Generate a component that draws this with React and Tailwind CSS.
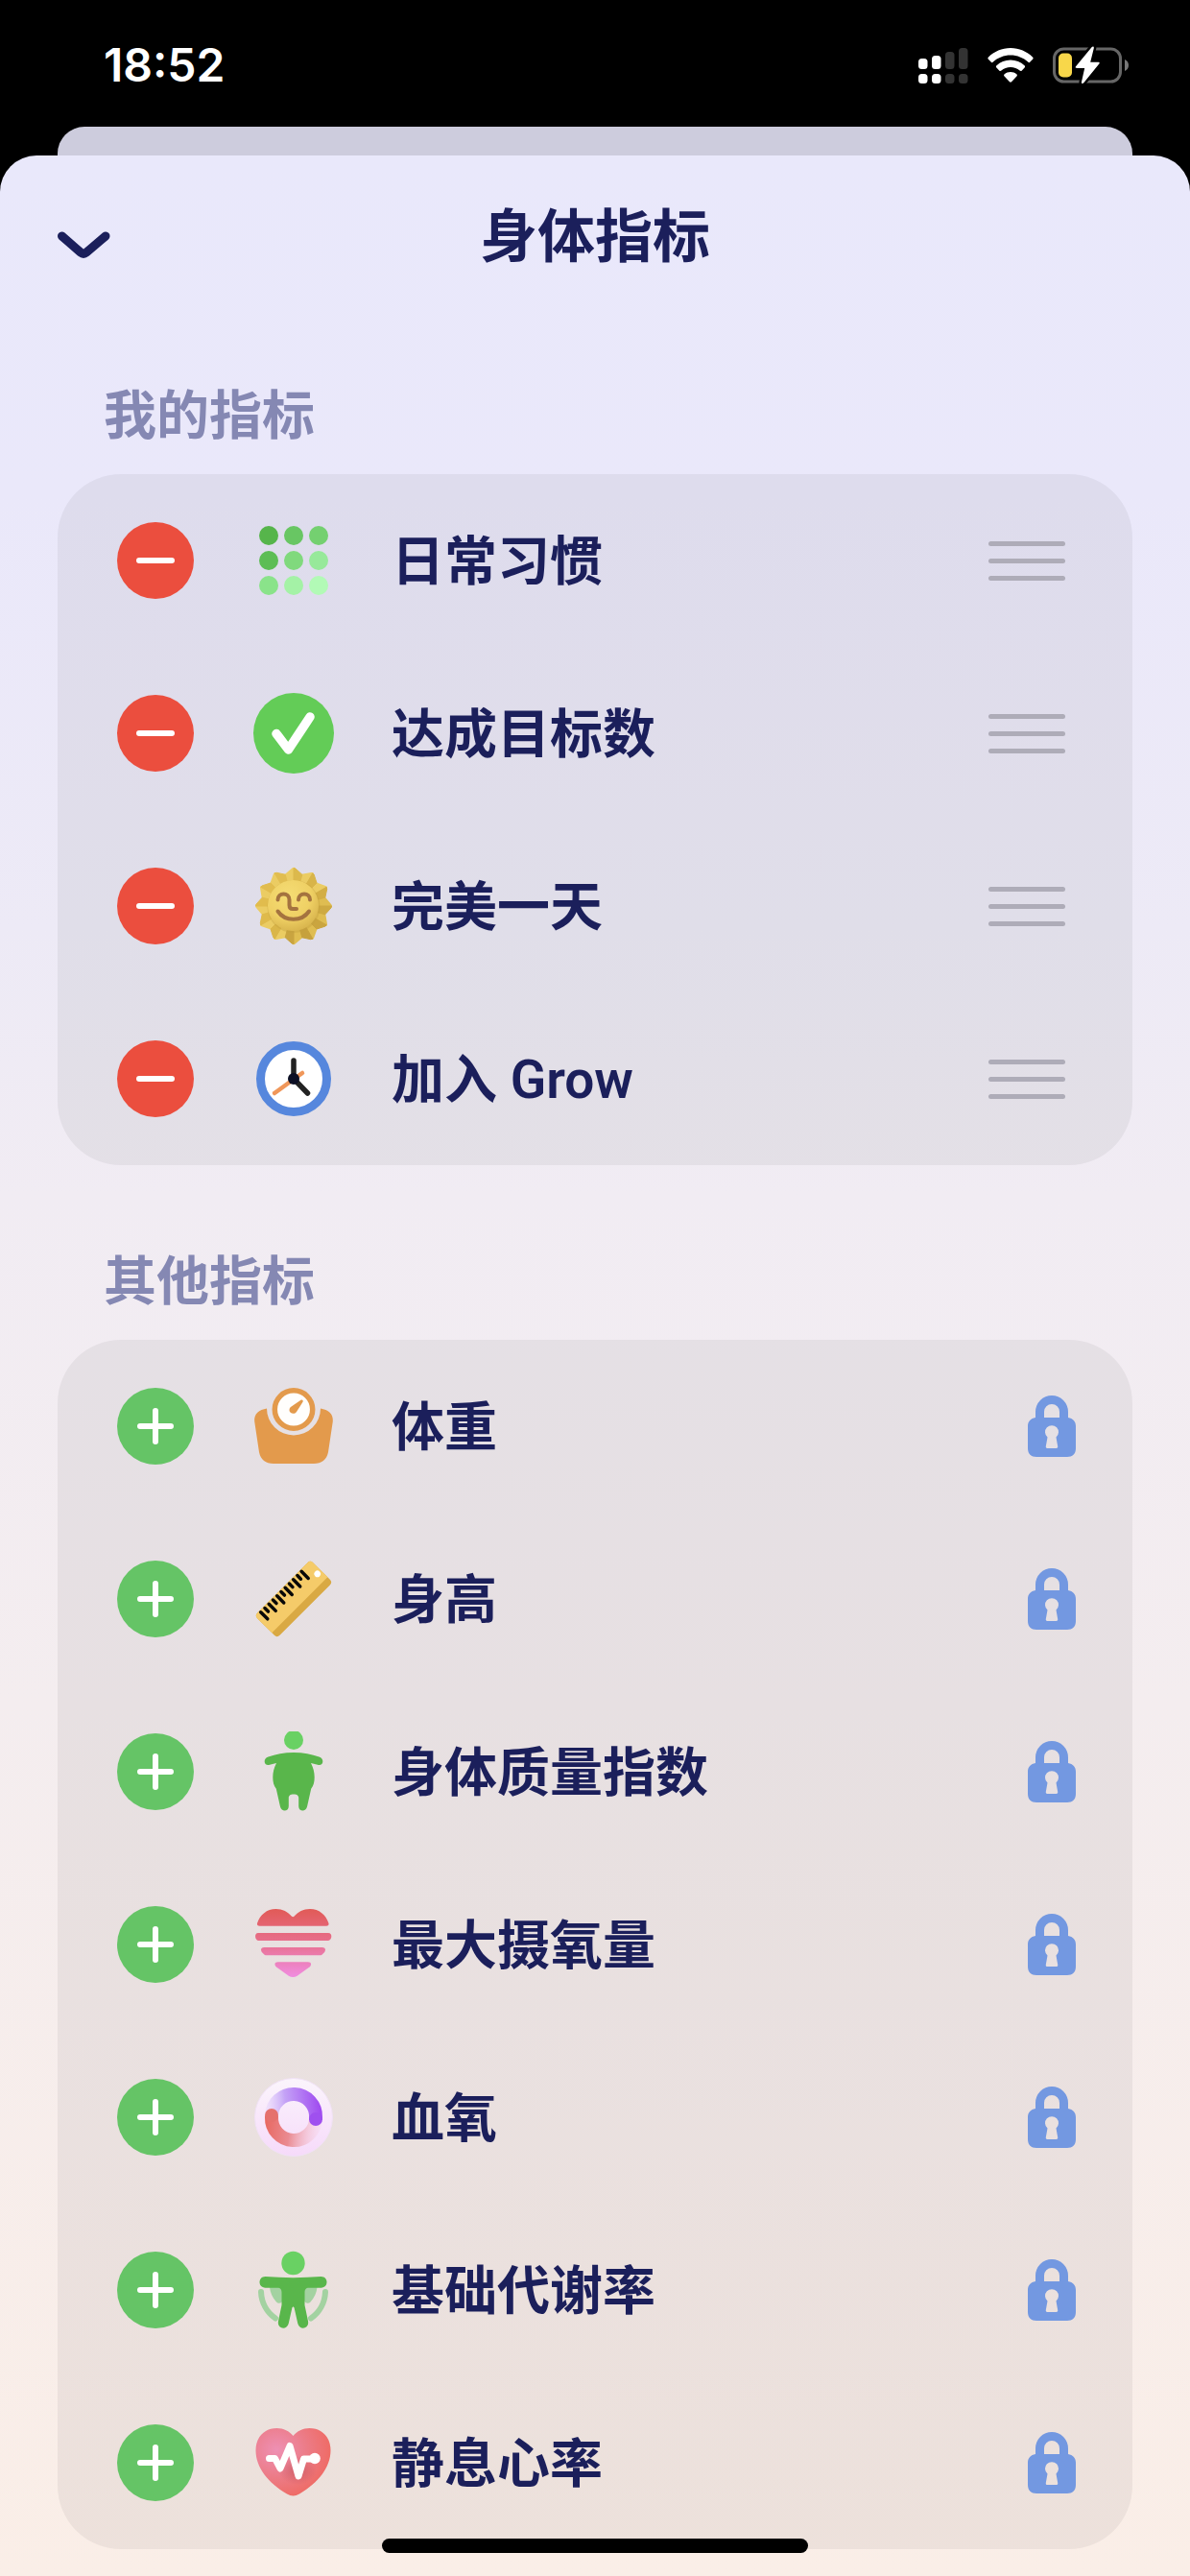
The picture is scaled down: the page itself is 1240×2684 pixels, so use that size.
import React, { useState } from 'react';

/* ---------- Status bar icons ---------- */

const SignalIcon = () => {
  const bars = [
    { x: 0, y: 11, h: 11, on: true },
    { x: 14, y: 8, h: 14, on: true },
    { x: 28, y: 4, h: 18, on: false },
    { x: 42, y: 0, h: 22, on: false },
  ];

  return (
    <svg className="w-[52px] h-[37px]" viewBox="0 0 52 37" aria-hidden="true">
      {bars.map((bar) => (
        <g key={bar.x} fill={bar.on ? '#ffffff' : '#333333'}>
          <rect x={bar.x} y={bar.y} width="9.5" height={bar.h} rx="3.5" />
          <rect x={bar.x} y="27" width="9.5" height="10" rx="3.5" />
        </g>
      ))}
    </svg>
  );
};

const WifiIcon = () => (
  <svg className="w-12 h-9" viewBox="0 0 48 36" fill="#ffffff" aria-hidden="true">
    <path d="M24 0C33 0 41 3.6 47 9.4c.8.8.8 1.6.1 2.3l-2.7 2.9c-.7.7-1.5.7-2.2 0C37.4 10.300 31 7.600 24 7.600S10.600 10.300 5.800 14.600c-.7.7-1.500.7-2.200 0L.9 11.700c-.7-.7-.7-1.500.1-2.300C7 3.600 15 0 24 0Z" />
    <path d="M24 12.500c5.600 0 10.700 2.200 14.500 5.800.8.8.8 1.600.1 2.300l-2.800 2.900c-.7.7-1.400.7-2.200.1C31 21.300 27.700 20 24 20s-7 1.300-9.600 3.600c-.8.6-1.500.6-2.200-.1l-2.800-2.900c-.7-.7-.7-1.500.1-2.300 3.800-3.600 8.900-5.800 14.500-5.800Z" />
    <path d="M24 25c2.400 0 4.600.9 6.300 2.300.8.7.8 1.500.1 2.200L25 35.200c-.6.600-1.400.6-2 0l-5.400-5.700c-.7-.7-.7-1.500.1-2.200C19.400 25.900 21.600 25 24 25Z" />
  </svg>
);

const BatteryIcon = () => (
  <svg className="w-20 h-10" viewBox="0 0 80 40" aria-hidden="true">
    <rect x="1.500" y="3" width="69" height="34" rx="10" fill="none" stroke="#666666" strokeWidth="3" />
    <path d="M75 14c2.500 1 4 3.300 4 6s-1.500 5-4 6Z" fill="#777777" />
    <rect x="6" y="7.500" width="14" height="25" rx="5" fill="#f8d74a" />
    <path
      d="M40.500 1.200 24 21.200c-.8 1-.3 1.800.9 1.800h8.300L30 37.200c-.4 2 1.200 2.400 2.300 1L48.300 18.600c.8-1 .4-1.800-.9-1.800h-8.200L42.800 2.200c.4-2-1.200-2.300-2.300-1Z"
      fill="#ffffff"
      stroke="#000000"
      strokeWidth="5"
      paintOrder="stroke"
    />
  </svg>
);

/* ---------- Metric icons, all on an 84 x 84 canvas ---------- */

const IconCanvas = ({ children }) => (
  <svg className="w-[84px] h-[84px] shrink-0" viewBox="0 0 84 84" fill="none" aria-hidden="true">
    {children}
  </svg>
);

const HabitIcon = () => {
  const rows = [
    ['#56b54b', '#68c663', '#74d070'],
    ['#5dbd55', '#80d97d', '#97e99a'],
    ['#8ae38a', '#a4f2a6', '#b2fab6'],
  ];
  return (
    <IconCanvas>
      {rows.map((row, r) =>
        row.map((color, c) => (
          <circle key={color} cx={16 + c * 26} cy={16 + r * 26} r="10" fill={color} />
        ))
      )}
    </IconCanvas>
  );
};

const GoalIcon = () => (
  <IconCanvas>
    <circle cx="42" cy="42" r="42" fill="#63cc57" />
    <path d="m24 42.500 12.500 16.500L59 25" stroke="#fff" strokeWidth="9.500" strokeLinecap="round" strokeLinejoin="round" />
  </IconCanvas>
);

const SunIcon = () => {
  const point = (angle, radius) => {
    const rad = ((angle - 90) * Math.PI) / 180;
    return `${(42 + radius * Math.cos(rad)).toFixed(1)} ${(42 + radius * Math.sin(rad)).toFixed(1)}`;
  };
  const rays = Array.from({ length: 12 }, (_, i) => i * 30);
  const shades = ['#dcb94c', '#d8b449', '#d3ae45', '#ceaa42', '#caa53f', '#c6a13d', '#c9a440', '#dab649', '#dfba4b', '#e1bc4d', '#e1bc4e', '#e1bd50'];

  return (
    <IconCanvas>
      <defs>
        <radialGradient id="sunFace" cx="0.4" cy="0.3" r="0.75">
          <stop offset="0" stopColor="#f5dc74" />
          <stop offset="0.6" stopColor="#efd064" />
          <stop offset="1" stopColor="#d6b24b" />
        </radialGradient>
      </defs>
      {rays.map((angle, i) => (
        <path
          key={angle}
          d={`M42 42 L${point(angle - 14, 32)} L${point(angle, 37.5)} Z`}
          fill={i > 2 && i < 7 ? '#dfbd51' : '#ebcc63'}
          stroke={i > 2 && i < 7 ? '#dfbd51' : '#ebcc63'}
          strokeWidth="5"
          strokeLinejoin="round"
        />
      ))}
      {rays.map((angle, i) => (
        <path
          key={angle}
          d={`M42 42 L${point(angle, 39.5)} L${point(angle + 3, 39)} L${point(angle + 15, 34)} Z`}
          fill={shades[i]}
          stroke={shades[i]}
          strokeLinejoin="round"
        />
      ))}
      <circle cx="42" cy="42.500" r="27.500" fill="#c39f3e" opacity="0.4" />
      <circle cx="41.500" cy="41.500" r="26.500" fill="url(#sunFace)" />
      <g stroke="#a4733f" strokeWidth="4" strokeLinecap="round" strokeLinejoin="round">
        <path d="M25.500 35.500c0-8 12-8 12 0v5.500c0 2.500 1 4 3.500 4h4" />
        <path d="M47 35.500c0-8 12-8 12 0" />
        <path d="M25.500 47.500c7.500 11 25 11 32.500 0" />
      </g>
    </IconCanvas>
  );
};

const ClockIcon = () => (
  <IconCanvas>
    <circle cx="42" cy="42" r="34.500" fill="#fff" stroke="#5687dd" strokeWidth="9" />
    <path d="M51 36 22 57" stroke="#f0975a" strokeWidth="4.500" strokeLinecap="round" />
    <path d="M42 23v19l14.500 15" stroke="#222222" strokeWidth="5.500" strokeLinecap="round" strokeLinejoin="round" />
    <circle cx="42" cy="42" r="6" fill="#0c0f24" />
  </IconCanvas>
);

const ScaleIcon = () => (
  <IconCanvas>
    <path
      d="M14 23.500C6 25 .5 29 1.200 37L6 69c1.500 8 7 12 15 12h42c8 0 13.500-4 15-12l4.800-32C83.500 29 78 25 70 23.500A28 28 0 0 1 14 23.500Z"
      fill="#e39a4c"
    />
    <circle cx="42" cy="24.500" r="19.700" fill="#fffefc" stroke="#e39a4c" strokeWidth="5.500" />
    <path d="M49.500 14.700c1.500-.8 2.800.4 2 2L45 27c-1.500 2.300-4.500 2.300-6.300.8s-1.500-4.300.2-5.800Z" fill="#e39a4c" />
  </IconCanvas>
);

const RulerIcon = () => (
  <IconCanvas>
    <g transform="rotate(-45 42 42)">
      <rect x="1" y="25.500" width="82" height="33" rx="4" fill="#d9a943" />
      <path d="M5 25.500h74a4 4 0 0 1 4 4V51H1V29.500a4 4 0 0 1 4-4Z" fill="#f5cb69" />
      {Array.from({ length: 11 }, (_, i) => (
        <path
          key={i}
          d={`M${8 + i * 6} 27.500v${i % 2 ? 5 : 10}`}
          stroke="#080808"
          strokeWidth="3.500"
          strokeLinecap="round"
        />
      ))}
      <circle cx="78" cy="41" r="3.300" fill="#fff" />
    </g>
  </IconCanvas>
);

const BodyMassIcon = () => (
  <IconCanvas>
    <circle cx="42" cy="9" r="10" fill="#69d163" />
    <path
      d="M42 22c10 0 19 2 26.500 4.500 6 2 4.500 10-1.500 8.300L60 33c2.500 5 3.700 9.500 3.700 14.700 0 5-1 9-3.500 12L56 78.500c-1.500 6-8.800 5-8.800-.5v-8.500c0-2.500-1.500-4-5.200-4s-5.200 1.500-5.200 4V78c0 5.500-7.300 6.500-8.800.5l-4.200-18.800c-2.500-3-3.500-7-3.500-12 0-5.200 1.200-9.700 3.700-14.700l-7 1.800c-6 1.700-7.500-6.300-1.500-8.300C23 24 32 22 42 22Z"
      fill="#59b64b"
    />
  </IconCanvas>
);

const OxygenUptakeIcon = () => (
  <IconCanvas>
    <defs>
      <linearGradient id="uptake" x1="0" y1="5" x2="0" y2="76" gradientUnits="userSpaceOnUse">
        <stop offset="0" stopColor="#e15a57" />
        <stop offset="0.5" stopColor="#e8708f" />
        <stop offset="1" stopColor="#f08de0" />
      </linearGradient>
    </defs>
    <g fill="url(#uptake)">
      <path d="M4 20C7 11 14 5 23.500 5c7 0 12.500 3 16.300 7.500.9 1.100 2 1.100 2.900 0C46.500 8 52 5 59 5c9.500 0 16.500 6 19.500 15 .4 1.600-.6 2.700-2.500 2.700H6.500C4.600 22.700 3.600 21.600 4 20Z" />
      <path d="M5 30h73c5 0 4 8-.5 8h-72C1.500 38 .5 30 5 30Z" />
      <path d="M11.500 45h60c4.500 0 4 3.500 2 5.700-1.500 1.600-2.500 2.600-4.500 2.600H14c-2 0-3-1-4.500-2.600C7.500 48.500 7 45 11.500 45Z" />
      <path d="M25.500 60.300H57c3.500 0 4 3.200 1.500 5.200L46 74.500c-3.200 2-6.300 2-9.500 0L24 65.500c-2.500-2-2-5.200 1.500-5.200Z" />
    </g>
  </IconCanvas>
);

const BloodOxygenIcon = () => (
  <IconCanvas>
    <defs>
      <linearGradient id="oxyDisc" x1="42" y1="1" x2="42" y2="83" gradientUnits="userSpaceOnUse">
        <stop offset="0" stopColor="#fbf5fc" />
        <stop offset="1" stopColor="#f6dafa" />
      </linearGradient>
      <linearGradient id="oxyPurple" x1="12" y1="44" x2="70" y2="38" gradientUnits="userSpaceOnUse">
        <stop offset="0.02" stopColor="#d9c6fb" stopOpacity="0.2" />
        <stop offset="0.4" stopColor="#c4a2f6" />
        <stop offset="1" stopColor="#a04df0" />
      </linearGradient>
      <linearGradient id="oxyRed" x1="12" y1="42" x2="72" y2="50" gradientUnits="userSpaceOnUse">
        <stop offset="0" stopColor="#e8675f" />
        <stop offset="0.45" stopColor="#ea8b92" />
        <stop offset="1" stopColor="#f6d3e6" stopOpacity="0.2" />
      </linearGradient>
    </defs>
    <circle cx="42" cy="42" r="40.500" fill="url(#oxyDisc)" stroke="#f1e2f6" />
    <path d="M65 44a23 23 0 0 1-46-2v-1" stroke="url(#oxyRed)" strokeWidth="14" />
    <path d="M19 40a23 23 0 0 1 46 2v3" stroke="url(#oxyPurple)" strokeWidth="14" />
    <circle cx="65" cy="44" r="7" fill="#9f50ef" />
    <circle cx="19" cy="40" r="7" fill="#e5716d" />
  </IconCanvas>
);

const MetabolismIcon = () => (
  <IconCanvas>
    <g stroke="#a3d2a1" strokeWidth="6" strokeLinecap="round">
      <path d="M8 44c.5 11 6 21.500 15 27.500" />
      <path d="M75 44c-.5 11-6 21.500-15 27.500" />
    </g>
    <path d="M17 39c.5 6 3 11 7 15.500 2.500 2.500 6 .8 6.500-1.500V39ZM66.500 39c-.5 6-3 11-7 15.500-2.500 2.500-6 .8-6.500-1.500V39Z" fill="#a3d2a1" />
    <circle cx="41.500" cy="14" r="12.200" fill="#69d163" />
    <path
      d="M12.500 28c19 1.500 39 1.500 58 0 8 0 8 11.700 0 11.700H58c-3.500 0-4.500 2-4.500 5v13L57 74.500c1.500 8-8.700 10-10.700 2.500l-3.600-16c-.5-2-1.900-2-2.400 0L36.700 77c-2 7.500-12.200 5.500-10.700-2.500l3.500-16.800v-13c0-3-1-5-4.500-5H12.500c-8 0-8-11.700 0-11.700Z"
      fill="#59b64b"
    />
  </IconCanvas>
);

const HeartRateIcon = () => (
  <IconCanvas>
    <defs>
      <radialGradient id="heartFill" cx="0.28" cy="0.32" r="0.75">
        <stop offset="0" stopColor="#ee90b4" />
        <stop offset="0.55" stopColor="#ec7b86" />
        <stop offset="1" stopColor="#ef6a63" />
      </radialGradient>
      <radialGradient id="heartShade" cx="0.5" cy="0.5" r="0.5">
        <stop offset="0" stopColor="#c4555e" stopOpacity="0.7" />
        <stop offset="1" stopColor="#c4555e" stopOpacity="0" />
      </radialGradient>
    </defs>
    <path
      d="M41.500 14C45.500 9 51.500 6 58.500 6 71.500 6 80.500 15.500 80.500 29c0 18-13 34-32.500 45.500-4.500 2.500-8.500 2.500-13 0C15.500 63 2.500 47 2.500 29 2.500 15.500 11.500 6 24.500 6c7 0 13 3 17 8Z"
      fill="url(#heartFill)"
    />
    <ellipse cx="46" cy="50" rx="20" ry="15" fill="url(#heartShade)" />
    <path d="M16.500 37.500h6L28 48l10-23.500L47 56l5.500-18H63" stroke="#fff" strokeWidth="7" strokeLinecap="round" strokeLinejoin="round" />
    <circle cx="64" cy="37.500" r="5.800" fill="#fff" />
  </IconCanvas>
);

/* ---------- Row controls ---------- */

const DragHandle = () => (
  <span className="flex flex-col gap-[13px] w-20 shrink-0 cursor-grab">
    <span className="h-[5px] rounded-full bg-[#aeacb8]" />
    <span className="h-[5px] rounded-full bg-[#aeacb8]" />
    <span className="h-[5px] rounded-full bg-[#aeacb8]" />
  </span>
);

const LockIcon = () => (
  <svg className="w-[50px] h-16 shrink-0" viewBox="0 0 50 64" role="img" aria-label="已锁定">
    <path
      fillRule="evenodd"
      fill="#7398e1"
      d="M8 23v-6a17 17 0 0 1 34 0v6c5 .8 8 4 8 9v23c0 6-3.500 9-9 9H9c-5.500 0-9-3-9-9V32c0-5 3-8.200 8-9Zm9 0h16v-6a8 8 0 0 0-16 0Zm3.500 20.500L18.800 53c-.2 1.300.4 2 1.700 2h9c1.300 0 1.900-.7 1.700-2l-1.700-9.500a7 7 0 1 0-9 0Z"
    />
  </svg>
);

const MetricRow = ({ metric, active, onToggle }) => {
  const Icon = metric.icon;

  return (
    <li className={`flex items-center h-[180px] pl-[62px] ${active ? 'pr-[70px]' : 'pr-[59px]'}`}>
      <button
        type="button"
        onClick={() => onToggle(metric.id)}
        aria-label={`${active ? '移除' : '添加'}${metric.name}`}
        className={`flex items-center justify-center w-20 h-20 shrink-0 rounded-full ${active ? 'bg-[#eb4e3e]' : 'bg-[#65c466]'}`}
      >
        <svg className="w-10 h-10" viewBox="0 0 40 40" stroke="#fff" strokeWidth="6" strokeLinecap="round" aria-hidden="true">
          <path d={active ? 'M3 20h34' : 'M4 20h32M20 4v32'} />
        </svg>
      </button>
      <div className="ml-[62px] flex">
        <Icon />
      </div>
      <span className="flex-1 ml-[60px] pt-[2px] text-[55px] leading-[64px] font-semibold text-[#1b1f5b]">{metric.name}</span>
      {active ? <DragHandle /> : <LockIcon />}
    </li>
  );
};

const MetricSection = ({ title, metrics, active, onToggle }) => (
  <section>
    <h2 className="pl-12 mb-7 text-[55px] leading-[66px] font-semibold text-[#8588b3]">{title}</h2>
    <ul className="rounded-[66px] bg-black/5">
      {metrics.map((metric) => (
        <MetricRow key={metric.id} metric={metric} active={active} onToggle={onToggle} />
      ))}
    </ul>
  </section>
);

const METRICS = [
  { id: 'habits', name: '日常习惯', icon: HabitIcon },
  { id: 'goals', name: '达成目标数', icon: GoalIcon },
  { id: 'perfect-day', name: '完美一天', icon: SunIcon },
  { id: 'joined', name: '加入 Grow', icon: ClockIcon },
  { id: 'weight', name: '体重', icon: ScaleIcon },
  { id: 'height', name: '身高', icon: RulerIcon },
  { id: 'bmi', name: '身体质量指数', icon: BodyMassIcon },
  { id: 'vo2max', name: '最大摄氧量', icon: OxygenUptakeIcon },
  { id: 'spo2', name: '血氧', icon: BloodOxygenIcon },
  { id: 'bmr', name: '基础代谢率', icon: MetabolismIcon },
  { id: 'resting-hr', name: '静息心率', icon: HeartRateIcon },
];

const App = () => {
  const [mine, setMine] = useState(['habits', 'goals', 'perfect-day', 'joined']);

  const toggleMetric = (id) => {
    setMine((current) => (current.includes(id) ? current.filter((m) => m !== id) : [...current, id]));
  };

  return (
    <div className="relative flex flex-col min-h-screen bg-black font-['Roboto','Noto_Sans_CJK_SC',sans-serif]">
      <header className="flex items-center justify-between h-[132px] pl-[108px] pr-[63px]">
        <time className="pt-1 font-['Inter',sans-serif] text-[48px] leading-[56px] font-semibold text-white">18:52</time>
        <div className="flex items-center gap-5 pt-1">
          <SignalIcon />
          <WifiIcon />
          <BatteryIcon />
        </div>
      </header>

      {/* Top edge of the previous screen, behind the sheet */}
      <div className="h-[30px] mx-[60px] rounded-t-[28px] bg-[#cdccdd]" />

      <main className="flex-1 px-[60px] pb-7 rounded-t-[38px] bg-[linear-gradient(180deg,#e9e8fb_0%,#eae8fa_14%,#edeaf6_32%,#f1ecf3_43%,#f4edef_64%,#faeee7_100%)]">
        <div className="grid grid-cols-[56px_1fr_56px] items-center h-[168px]">
          <button type="button" aria-label="关闭" className="w-14 h-14">
            <svg viewBox="0 0 56 56" fill="none" stroke="#1b1f5b" strokeWidth="9" strokeLinecap="round" aria-hidden="true">
              <path d="m4.500 28 19.500 17q3 2.500 6 0l20-17" />
            </svg>
          </button>
          <h1 className="pt-1 text-center text-[60px] leading-[72px] font-semibold text-[#1b1f5b]">身体指标</h1>
        </div>

        <div className="flex flex-col gap-[88px] pt-[70px]">
          <MetricSection
            title="我的指标"
            metrics={METRICS.filter((m) => mine.includes(m.id))}
            active
            onToggle={toggleMetric}
          />
          <MetricSection
            title="其他指标"
            metrics={METRICS.filter((m) => !mine.includes(m.id))}
            active={false}
            onToggle={toggleMetric}
          />
        </div>
      </main>

      <div className="absolute bottom-6 left-1/2 -translate-x-1/2 w-[444px] h-[15px] rounded-full bg-black" />
    </div>
  );
};

export default App;
